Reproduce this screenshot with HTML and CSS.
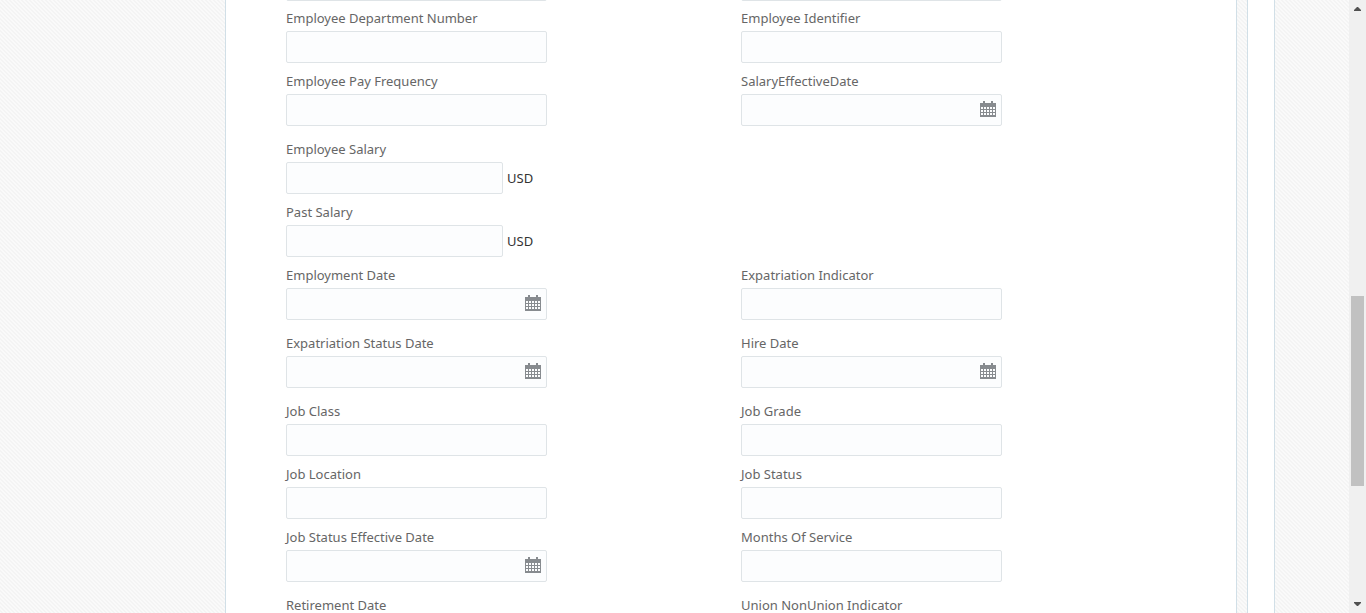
FILE: index.html
```html
<!DOCTYPE html>
<html lang="en">
<head>
<meta charset="utf-8">
<title>Employee Details</title>
<link rel="stylesheet" href="styles.css">
</head>
<body>
<svg class="defs" aria-hidden="true">
  <symbol id="calendar" viewBox="0 0 16 16">
    <path fill="currentColor" fill-rule="evenodd" d="M3 0h2v2h6V0h2v2h3v14H0V2h3zM1 6v2h2V6zM4 6v2h2V6zM7 6v2h2V6zM10 6v2h2V6zM13 6v2h2V6zM1 9v2h2V9zM4 9v2h2V9zM7 9v2h2V9zM10 9v2h2V9zM13 9v2h2V9zM1 12v2h2v-2zM4 12v2h2v-2zM7 12v2h2v-2zM10 12v2h2v-2zM13 12v2h2v-2z"/>
  </symbol>
</svg>
<div class="page">
  <div class="frame">
    <main class="panel">
      <form class="form">
        <div class="row row-cut">
          <div class="control"><input type="text" aria-label="Previous field, left"></div>
          <div class="control"><input type="text" aria-label="Previous field, right"></div>
        </div>
        <div class="row">
          <div class="field"><label for="dept">Employee Department Number</label><div class="control"><input type="text" id="dept"></div></div>
          <div class="field"><label for="ident">Employee Identifier</label><div class="control"><input type="text" id="ident"></div></div>
        </div>
        <div class="row row-date">
          <div class="field"><label for="freq">Employee Pay Frequency</label><div class="control"><input type="text" id="freq"></div></div>
          <div class="field"><label for="saldate">SalaryEffectiveDate</label><div class="control"><input type="text" id="saldate"><button type="button" class="pick" aria-label="Select date"><svg><use href="#calendar"/></svg></button></div></div>
        </div>
        <div class="row">
          <div class="field"><label for="salary">Employee Salary</label><div class="control control-money"><input type="text" id="salary"><span>USD</span></div></div>
        </div>
        <div class="row">
          <div class="field"><label for="past">Past Salary</label><div class="control control-money"><input type="text" id="past"><span>USD</span></div></div>
        </div>
        <div class="row row-date">
          <div class="field"><label for="empdate">Employment Date</label><div class="control"><input type="text" id="empdate"><button type="button" class="pick" aria-label="Select date"><svg><use href="#calendar"/></svg></button></div></div>
          <div class="field"><label for="expat">Expatriation Indicator</label><div class="control"><input type="text" id="expat"></div></div>
        </div>
        <div class="row row-date">
          <div class="field"><label for="expdate">Expatriation Status Date</label><div class="control"><input type="text" id="expdate"><button type="button" class="pick" aria-label="Select date"><svg><use href="#calendar"/></svg></button></div></div>
          <div class="field"><label for="hire">Hire Date</label><div class="control"><input type="text" id="hire"><button type="button" class="pick" aria-label="Select date"><svg><use href="#calendar"/></svg></button></div></div>
        </div>
        <div class="row">
          <div class="field"><label for="jclass">Job Class</label><div class="control"><input type="text" id="jclass"></div></div>
          <div class="field"><label for="jgrade">Job Grade</label><div class="control"><input type="text" id="jgrade"></div></div>
        </div>
        <div class="row">
          <div class="field"><label for="jloc">Job Location</label><div class="control"><input type="text" id="jloc"></div></div>
          <div class="field"><label for="jstat">Job Status</label><div class="control"><input type="text" id="jstat"></div></div>
        </div>
        <div class="row row-date">
          <div class="field"><label for="jdate">Job Status Effective Date</label><div class="control"><input type="text" id="jdate"><button type="button" class="pick" aria-label="Select date"><svg><use href="#calendar"/></svg></button></div></div>
          <div class="field"><label for="months">Months Of Service</label><div class="control"><input type="text" id="months"></div></div>
        </div>
        <div class="row row-date">
          <div class="field"><label for="retire">Retirement Date</label><div class="control"><input type="text" id="retire"><button type="button" class="pick" aria-label="Select date"><svg><use href="#calendar"/></svg></button></div></div>
          <div class="field"><label for="union">Union NonUnion Indicator</label><div class="control"><input type="text" id="union"></div></div>
        </div>
      </form>
    </main>
    <div class="gutter"></div>
    <div class="edge"></div>
  </div>
  <div class="scrollbar" aria-hidden="true">
    <svg class="arrow" viewBox="0 0 17 17"><path d="M5 11h7v-1L9 7H8L5 10z"/></svg>
    <div class="before"></div>
    <div class="thumb"></div>
    <div class="after"></div>
    <svg class="arrow" viewBox="0 0 17 17"><path d="M5 6h7v1l-3 3H8L5 7z"/></svg>
  </div>
</div>
</body>
</html>
```
FILE: styles.css
```css
* { box-sizing: border-box; }

body {
  margin: 0;
  overflow: hidden;
  font-family: "Noto Sans", "Open Sans", sans-serif;
  font-size: 13px;
  line-height: 20px;
  color: #333;
}

.defs { display: none; }

.page {
  display: flex;
  height: 100vh;
  overflow: hidden;
  background: linear-gradient(45deg, #f4f4f4 25%, #fafafa 25% 50%, #f4f4f4 50% 75%, #fafafa 75%) 0 0 / 4px 4px;
}

.frame {
  display: flex;
  flex: 1;
  margin: 0 74px 0 225px;
  border: solid #d1dfe7;
  border-width: 0 1px;
}

.panel {
  flex: 1;
  padding: 0 40px 0 60px;
  background: #fff;
}

.gutter {
  width: 12px;
  border: solid #d1dfe7;
  border-width: 0 1px;
}

.edge {
  width: 26px;
  background: #fff;
}

.row {
  display: grid;
  grid-template-columns: 1fr 1fr;
  padding-bottom: 8px;
}

.row-date { padding-bottom: 13px; }

/* The form is scrolled so that only the bottom border of this row shows. */
.row-cut {
  margin-top: -31px;
  padding-bottom: 7px;
}

label {
  display: block;
  margin-bottom: 3px;
  color: #666;
}

.control {
  display: flex;
  align-items: center;
  position: relative;
  width: 261px;
}

.control-money { gap: 4px; }

input {
  flex: 1;
  min-width: 0;
  height: 32px;
  padding: 0 8px;
  border: 1px solid #dfe4e7;
  border-radius: 2px;
  background: #fcfdfe;
  font: inherit;
}

.control-money input { flex: 0 0 217px; }

.pick {
  position: absolute;
  right: 6px;
  top: 7px;
  padding: 0;
  border: 0;
  background: none;
  color: #878b8f;
}

.pick svg {
  display: block;
  width: 16px;
  height: 16px;
}

.scrollbar {
  display: flex;
  flex-direction: column;
  align-items: center;
  width: 17px;
  background: #f0f0f0;
}

.arrow {
  width: 17px;
  height: 17px;
  fill: #505050;
}

.before { flex: 279; }
.after { flex: 110; }

.thumb {
  flex: 190;
  width: 13px;
  background: #c1c1c1;
}
```
